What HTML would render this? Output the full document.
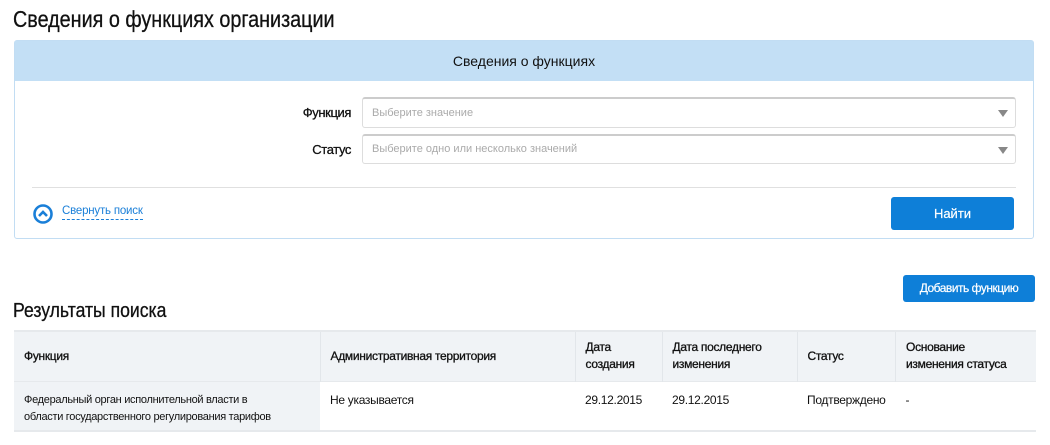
<!DOCTYPE html>
<html><head><meta charset="utf-8"><style>
*{box-sizing:border-box;margin:0;padding:0}
body{width:1050px;height:445px;background:#fff;font-family:"Liberation Sans",sans-serif;color:#111;position:relative;overflow:hidden}
.a{position:absolute}
h1{position:absolute;left:13px;top:6px;font-size:23px;font-weight:normal;transform:scaleX(0.86);transform-origin:0 0;white-space:nowrap;-webkit-text-stroke:0.3px #111}
.panel{left:14px;top:40px;width:1020px;height:199px;border:1px solid #c2ddf3;border-radius:3px}
.ph{left:0;top:0;width:1018px;height:40px;background:#c3dff5;text-align:center;line-height:40px;font-size:14px}
.lbl{font-size:13px;text-align:right;width:100px;letter-spacing:-0.4px;-webkit-text-stroke:0.3px #111}
.inp{left:347px;width:654px;border:1px solid #ddd;border-top:2px solid #ccc;border-radius:3px;color:#aaa;font-size:11px;padding-left:9px}
.tri{right:7px;top:11px;width:0;height:0;border-left:5px solid transparent;border-right:5px solid transparent;border-top:7px solid #888}
.btn{background:#0e7fd8;color:#fff;border-radius:3px;text-align:center;font-size:13px;-webkit-text-stroke:0.2px #fff}
table{position:absolute;left:14px;top:330px;width:1022px;border-collapse:collapse;font-size:12px;letter-spacing:-0.3px}
th{background:#f0f3f6;text-align:left;font-weight:normal;height:50px;padding:0 10px;vertical-align:middle;border-left:1px solid #e2e6ea;line-height:17px;border-top:2px solid #e6e9ec;-webkit-text-stroke:0.3px #111}
th:first-child,td:first-child{border-left:none}
td{height:50px;padding:10px 10px 0;vertical-align:top;line-height:17px;border-bottom:2px solid #e6e9ec;border-top:1px solid #e6e9ec}
</style></head><body>
<h1>Сведения о функциях организации</h1>
<div class="a panel">
 <div class="a ph">Сведения о функциях</div>
 <div class="a lbl" style="left:236px;top:64px">Функция</div>
 <div class="a inp" style="top:56px;height:31px;line-height:28px">Выберите значение<div class="a tri"></div></div>
 <div class="a lbl" style="left:236px;top:101px">Статус</div>
 <div class="a inp" style="top:93px;height:30px;line-height:27px">Выберите одно или несколько значений<div class="a tri"></div></div>
 <div class="a" style="left:17px;top:146px;width:984px;height:1px;background:#e0e0e0"></div>
 <svg class="a" style="left:17px;top:162px" width="22" height="22"><circle cx="11" cy="11" r="8.5" fill="none" stroke="#1a7fd8" stroke-width="2.6"/><path d="M7 13 L11 9 L15 13" fill="none" stroke="#1a7fd8" stroke-width="2.6"/></svg>
 <div class="a" style="left:47px;top:164px;font-size:11.5px;color:#1a7fd8;border-bottom:1px dashed #1a7fd8;padding-bottom:2px;letter-spacing:-0.2px">Свернуть поиск</div>
 <div class="a btn" style="left:876px;top:156px;width:123px;height:33px;line-height:33px">Найти</div>
</div>
<div class="a btn" style="left:903px;top:275px;width:132px;height:27px;line-height:27px;font-size:12px;letter-spacing:-0.5px">Добавить функцию</div>
<div class="a" style="left:13px;top:300px;font-size:20px;transform:scaleX(0.88);transform-origin:0 0;white-space:nowrap;-webkit-text-stroke:0.3px #111">Результаты поиска</div>
<table>
<tr><th style="width:306px">Функция</th><th style="width:255px">Административная территория</th><th style="width:87px">Дата<br>создания</th><th style="width:135px">Дата последнего<br>изменения</th><th style="width:94px">Статус</th><th>Основание<br>изменения статуса</th></tr>
<tr><td style="background:#f0f3f6;font-size:11px;padding-right:40px">Федеральный орган исполнительной власти в области государственного регулирования тарифов</td><td>Не указывается</td><td>29.12.2015</td><td>29.12.2015</td><td>Подтверждено</td><td>-</td></tr>
</table>
</body></html>
